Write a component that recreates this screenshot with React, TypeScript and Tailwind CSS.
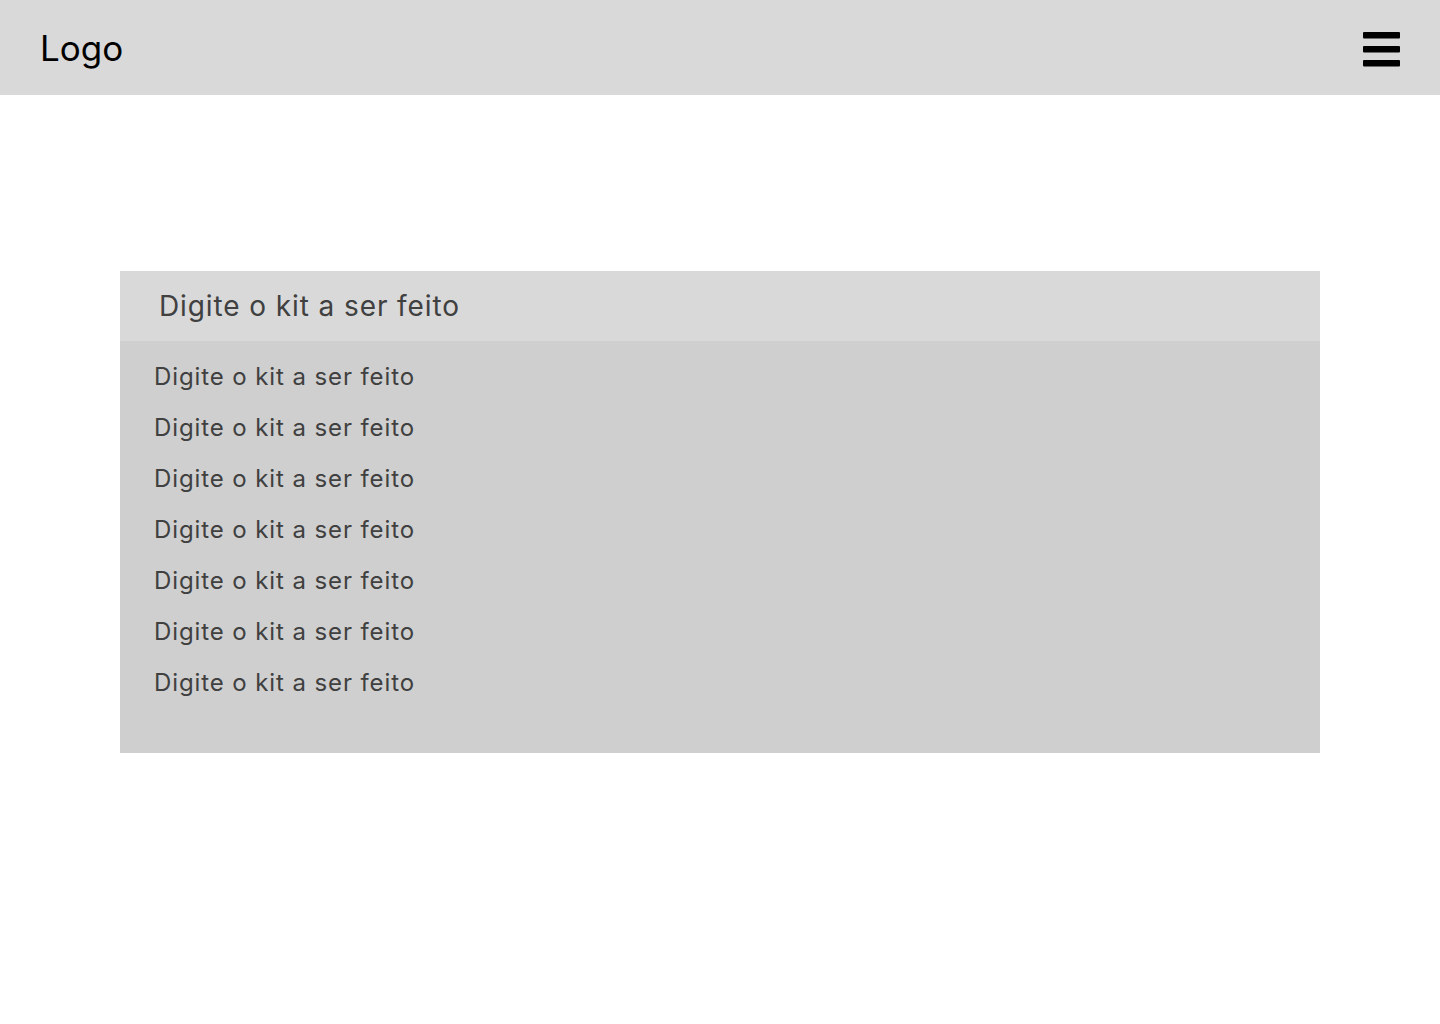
const items = Array.from({ length: 7 }, () => 'Digite o kit a ser feito');

export default function App() {
  return (
    <div className="min-h-[1024px] w-full bg-white font-['Inter',sans-serif]">
      <header className="flex h-[95px] items-center justify-between bg-[#d9d9d9] pl-[40px] pr-[40px]">
        <span className="mt-[2px] text-[35px] leading-none text-black">Logo</span>
        <svg className="mt-[5px]" width="37" height="36" viewBox="0 0 37 36" aria-label="menu">
          <rect x="0" y="0" width="37" height="6.5" rx="1" fill="#000" />
          <rect x="0" y="14" width="37" height="6.5" rx="1" fill="#000" />
          <rect x="0" y="28" width="37" height="6.5" rx="1" fill="#000" />
        </svg>
      </header>

      <main className="px-[120px] pt-[176px]">
        <div className="flex h-[70px] items-center bg-[#d9d9d9] pl-[39px]">
          <span className="text-[28px] tracking-[0.9px] text-[#404040]">Digite o kit a ser feito</span>
        </div>
        <ul className="h-[412px] bg-[#cfcfcf] pl-[34px] pt-[10px]">
          {items.map((item, i) => (
            <li key={i} className="text-[24px] leading-[51px] tracking-[0.9px] text-[#404040]">
              {item}
            </li>
          ))}
        </ul>
      </main>
    </div>
  );
}
